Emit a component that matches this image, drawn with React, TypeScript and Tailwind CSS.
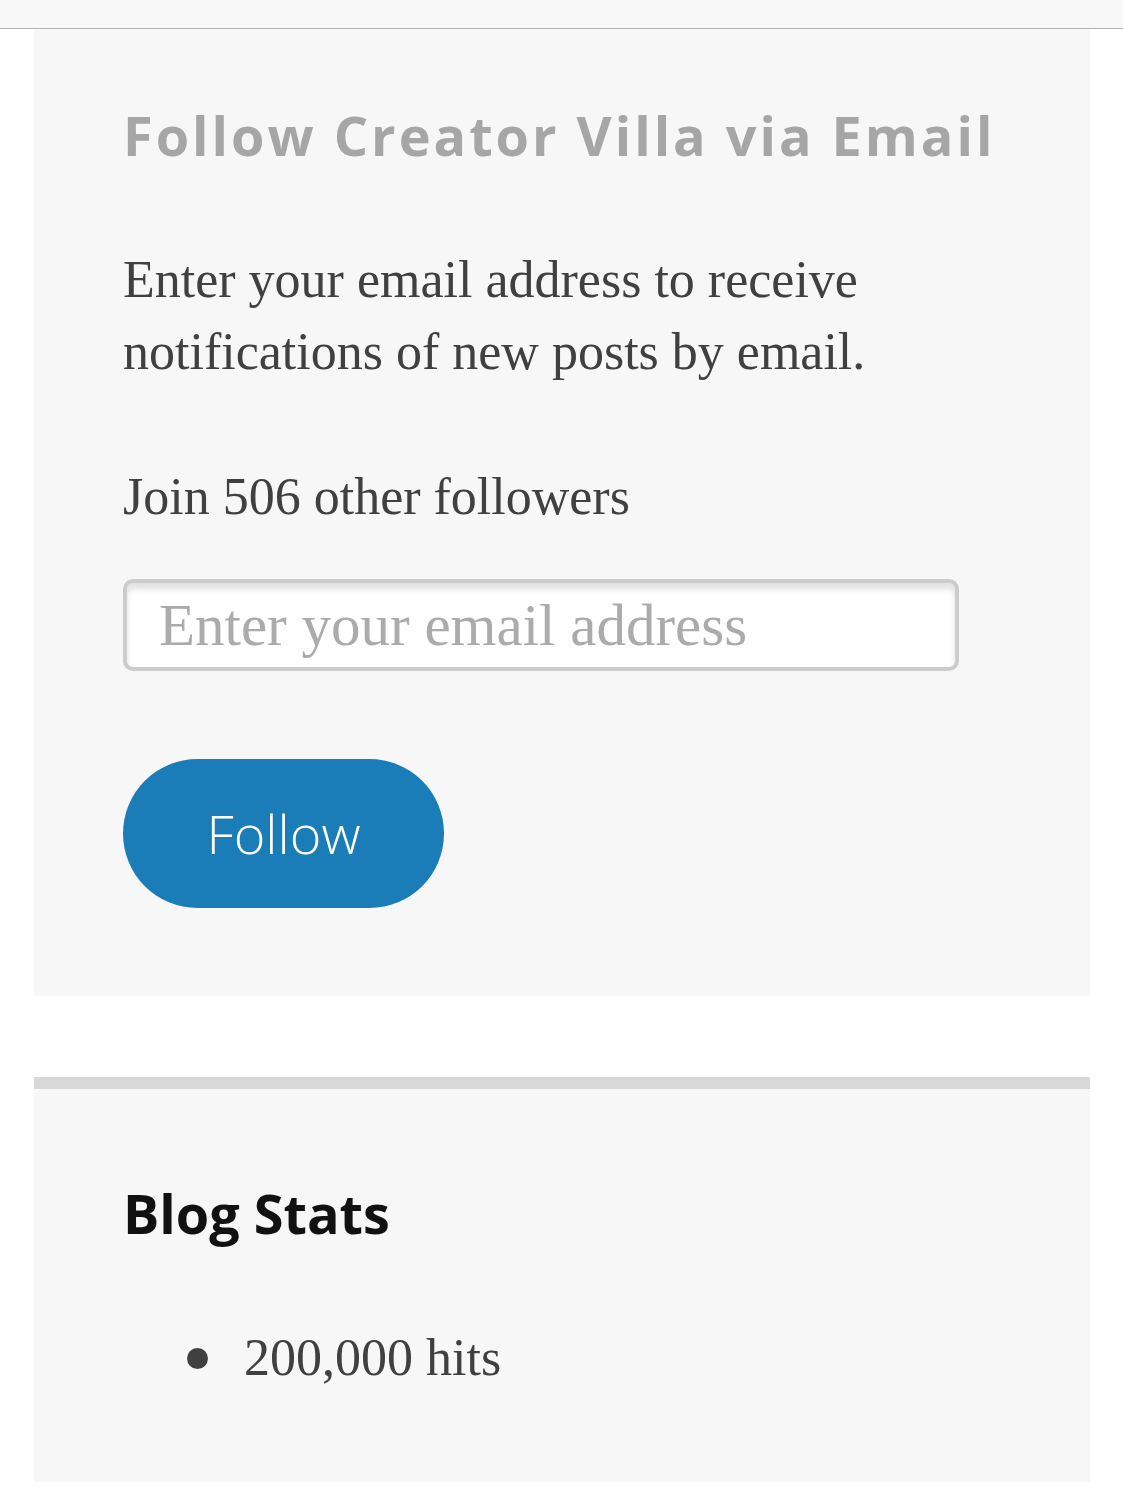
import React, { useState } from "react";

const App: React.FC = () => {
  const [email, setEmail] = useState("");

  return (
    <div className="min-h-screen bg-white">
      {/* top strip */}
      <div className="h-[29px] bg-[#f8f8f8] border-b border-[#b3b3b3]" />

      {/* Follow via email widget */}
      <section className="ml-[34px] mr-[33px] bg-[#f7f7f7] pl-[89px] pr-[40px] pt-[74px] pb-[88px]">
        <h2 className="font-['Open_Sans',sans-serif] font-bold text-[54px] leading-[64px] tracking-[3px] text-[#a6a6a6] whitespace-nowrap">
          Follow Creator Villa via Email
        </h2>
        <p className="mt-[77px] font-['Liberation_Serif',serif] text-[52px] leading-[72px] text-[#404040]">
          Enter your email address to receive
          <br />
          notifications of new posts by email.
        </p>
        <p className="mt-[73px] font-['Liberation_Serif',serif] text-[52px] leading-[72px] text-[#404040]">
          Join 506 other followers
        </p>
        <form onSubmit={(e) => e.preventDefault()}>
          <input
            type="email"
            value={email}
            onChange={(e) => setEmail(e.target.value)}
            placeholder="Enter your email address"
            className="mt-[46px] block w-[836px] h-[92px] rounded-[10px] border-[4px] border-[#cccccc] bg-white px-[32px] font-['Liberation_Serif',serif] text-[59px] text-[#404040] placeholder:text-[#ababab] shadow-[inset_0_6px_6px_rgba(0,0,0,0.12)] outline-none"
          />
          <button
            type="submit"
            className="mt-[88px] block w-[321px] h-[149px] rounded-full bg-[#1a7db8] font-['Open_Sans',sans-serif] font-light text-[54px] text-white"
          >
            Follow
          </button>
        </form>
      </section>

      <div className="h-[81px]" />

      {/* Blog stats widget */}
      <section className="ml-[34px] mr-[33px] bg-[#f7f7f7] border-t-[12px] border-[#d8d8d8] pl-[89px] pt-[92px] pb-[88px]">
        <h2 className="font-['Open_Sans',sans-serif] font-bold text-[54px] leading-[64px] text-[#111111]">
          Blog Stats
        </h2>
        <ul className="mt-[77px]">
          <li className="flex items-center pl-[64px] font-['Liberation_Serif',serif] text-[52px] leading-[72px] text-[#404040]">
            <span className="mr-[36px] inline-block w-[21px] h-[21px] rounded-full bg-[#404040]" />
            200,000 hits
          </li>
        </ul>
      </section>
    </div>
  );
};

export default App;
